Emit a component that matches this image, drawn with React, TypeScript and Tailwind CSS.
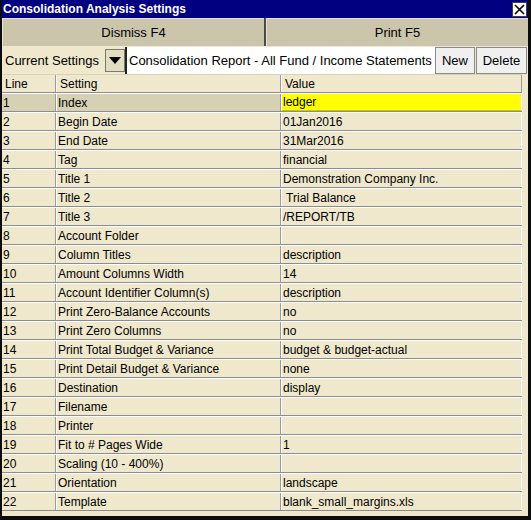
const ROWS: [string, string][] = [
  ['Index', 'ledger'],
  ['Begin Date', '01Jan2016'],
  ['End Date', '31Mar2016'],
  ['Tag', 'financial'],
  ['Title 1', 'Demonstration Company Inc.'],
  ['Title 2', ' Trial Balance'],
  ['Title 3', '/REPORT/TB'],
  ['Account Folder', ''],
  ['Column Titles', 'description'],
  ['Amount Columns Width', '14'],
  ['Account Identifier Column(s)', 'description'],
  ['Print Zero-Balance Accounts', 'no'],
  ['Print Zero Columns', 'no'],
  ['Print Total Budget & Variance', 'budget & budget-actual'],
  ['Print Detail Budget & Variance', 'none'],
  ['Destination', 'display'],
  ['Filename', ''],
  ['Printer', ''],
  ['Fit to # Pages Wide', '1'],
  ['Scaling (10 - 400%)', ''],
  ['Orientation', 'landscape'],
  ['Template', 'blank_small_margins.xls'],
];

export default function App() {
  return (
    <div
      className="w-[531px] h-[520px] bg-[#0c0c0c] pl-[2px] pr-[3px] pb-[4px] text-black"
      style={{ fontFamily: '"Liberation Sans", Arial, sans-serif' }}
    >
      <div className="flex h-full flex-col bg-[#efe8cd]">
        {/* title bar */}
        <div className="flex h-[18px] items-center justify-between bg-[#000080] pl-[1px] pr-[1px]">
          <span className="text-[12px] font-bold text-white">Consolidation Analysis Settings</span>
          <span className="flex h-[15px] w-[15px] items-center justify-center border border-[#404040] bg-white">
            <svg width="11" height="11" viewBox="0 0 11 11">
              <path d="M1 1L10 10M10 1L1 10" stroke="#000" strokeWidth="1.6" />
            </svg>
          </span>
        </div>

        {/* action buttons */}
        <div className="flex h-[29px] bg-[#4a4a4a] gap-[2px] border-b border-[#efe8cd]">
          <button className="flex-1 border-t border-l border-[#e8e4d4] bg-[#cbc5ab] text-[13px]">Dismiss F4</button>
          <button className="flex-1 border-t border-l border-[#e8e4d4] bg-[#cbc5ab] text-[13px]">Print F5</button>
        </div>

        {/* settings selector */}
        <div className="flex h-[27px] items-stretch pr-[1px]">
          <div className="flex w-[103px] items-center pl-[3px] text-[13px]">Current Settings</div>
          <div className="my-[2px] flex w-[20px] items-center justify-center border border-[#7a7a6a] bg-[#e2dcc2]">
            <svg width="12" height="7" viewBox="0 0 12 7">
              <path d="M0 0H12L6 7Z" fill="#000" />
            </svg>
          </div>
          <div className="flex w-[310px] items-center border-l-2 border-[#222] bg-white pl-[2px] text-[13px] whitespace-nowrap overflow-hidden">
            Consolidation Report - All Fund / Income Statements
          </div>
          <button className="w-[40px] border border-[#8a8a8a] bg-[#f0f0f0] text-[13px]">New</button>
          <button className="ml-[1px] flex-1 border border-[#8a8a8a] bg-[#f0f0f0] text-[13px]">Delete</button>
        </div>

        {/* table */}
        <div className="mr-[6px] text-[12px]">
          <div className="flex h-[19px] border-t border-[#d8d2b8] border-b border-b-[#8c8c8c]">
            <div className="flex w-[54px] items-center border-r border-r-[#9a9a9a] pl-[3px]">Line</div>
            <div className="flex w-[225px] items-center border-l border-l-white border-r border-r-[#9a9a9a] pl-[3px]">Setting</div>
            <div className="flex flex-1 items-center border-l border-l-white border-r border-r-[#9a9a9a] pl-[3px]">Value</div>
          </div>
          {ROWS.map(([setting, value], i) => {
            const sel = i === 0;
            return (
              <div key={setting} className={`flex h-[19px] border-t border-white border-b border-b-[#8c8c8c] ${sel ? 'bg-[#d6d0b5]' : ''}`}>
                <div className="flex w-[54px] items-center border-r border-r-[#9a9a9a] pl-[1px]">{i + 1}</div>
                <div className="flex w-[225px] items-center border-l border-l-white border-r border-r-[#9a9a9a] pl-[1px]">{setting}</div>
                <div
                  className={`flex flex-1 items-center border-l border-l-white border-r border-r-white pl-[1px] whitespace-pre ${
                    sel ? 'bg-[#ffff00] border-b border-b-[#c8c800]' : 'bg-[#efe8cd]'
                  }`}
                >
                  {value}
                </div>
              </div>
            );
          })}
        </div>
      </div>
    </div>
  );
}
